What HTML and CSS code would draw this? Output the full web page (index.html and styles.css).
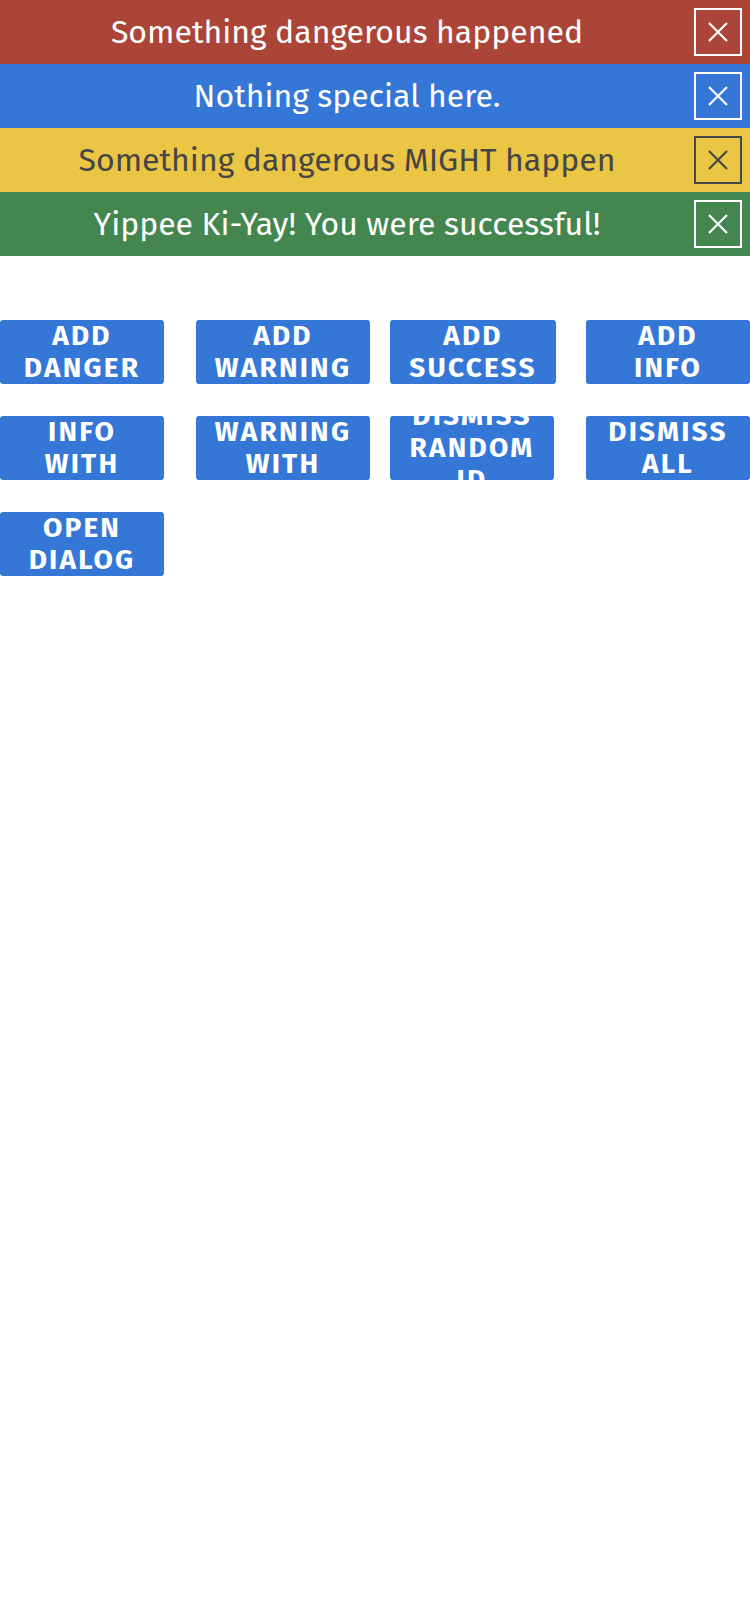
FILE: index.html
```html
<!DOCTYPE html>
<html lang="en">
<head>
<meta charset="utf-8">
<title>Notifications</title>
<link rel="stylesheet" href="styles.css">
</head>
<body>
<div class="alerts">
  <div class="alert alert-danger">
    <span class="alert-text">Something dangerous happened</span>
    <button class="alert-close" aria-label="Close"><svg viewBox="0 0 20 20" width="20" height="20"><path d="M1 1 L19 19 M19 1 L1 19" /></svg></button>
  </div>
  <div class="alert alert-info">
    <span class="alert-text">Nothing special here.</span>
    <button class="alert-close" aria-label="Close"><svg viewBox="0 0 20 20" width="20" height="20"><path d="M1 1 L19 19 M19 1 L1 19" /></svg></button>
  </div>
  <div class="alert alert-warning">
    <span class="alert-text">Something dangerous MIGHT happen</span>
    <button class="alert-close" aria-label="Close"><svg viewBox="0 0 20 20" width="20" height="20"><path d="M1 1 L19 19 M19 1 L1 19" /></svg></button>
  </div>
  <div class="alert alert-success">
    <span class="alert-text">Yippee Ki-Yay! You were successful!</span>
    <button class="alert-close" aria-label="Close"><svg viewBox="0 0 20 20" width="20" height="20"><path d="M1 1 L19 19 M19 1 L1 19" /></svg></button>
  </div>
</div>

<div class="actions">
  <button class="btn"><span class="btn-label">Add danger</span></button>
  <button class="btn btn-wide"><span class="btn-label">Add warning</span></button>
  <button class="btn btn-mid"><span class="btn-label">Add success</span></button>
  <button class="btn"><span class="btn-label">Add info</span></button>

  <button class="btn"><span class="btn-label">Info with</span></button>
  <button class="btn btn-wide"><span class="btn-label">Warning with</span></button>
  <button class="btn"><span class="btn-label">Dismiss random ID</span></button>
  <button class="btn"><span class="btn-label">Dismiss all</span></button>

  <button class="btn"><span class="btn-label">Open dialog</span></button>
</div>
</body>
</html>
```

FILE: styles.css
```css
html, body {
  margin: 0;
  padding: 0;
  background: #ffffff;
}

body {
  font-family: "Fira Sans", "Open Sans", "Noto Sans", sans-serif;
}

.alerts {
  display: flex;
  flex-direction: column;
}

.alert {
  height: 64px;
  display: flex;
  align-items: center;
  color: #ffffff;
}

.alert-danger { background: #ab4538; }
.alert-info { background: #3477d6; }
.alert-warning { background: #ebc544; color: #464646; }
.alert-success { background: #438650; }

.alert-text {
  flex: 1;
  text-align: center;
  font-size: 32px;
  line-height: 40px;
  white-space: nowrap;
}

.alert-close {
  width: 48px;
  height: 48px;
  margin-right: 8px;
  padding: 0;
  border: 2px solid currentColor;
  background: transparent;
  color: inherit;
  display: flex;
  align-items: center;
  justify-content: center;
  cursor: pointer;
}

.alert-close svg {
  display: block;
  stroke: currentColor;
  stroke-width: 2.2;
  fill: none;
}

.actions {
  margin-top: 64px;
  display: grid;
  grid-template-columns: 196px 194px 196px 164px;
  row-gap: 32px;
  justify-items: start;
}

.btn {
  width: 164px;
  height: 64px;
  padding: 0;
  border: none;
  border-radius: 3px;
  background: #3477d6;
  color: #ffffff;
  display: flex;
  align-items: center;
  justify-content: center;
  overflow: hidden;
  font-family: "Fira Sans", "Open Sans", "Noto Sans", sans-serif;
  font-weight: 700;
  font-size: 28px;
  line-height: 32px;
  letter-spacing: 2.2px;
  text-transform: uppercase;
  cursor: pointer;
}

.btn-wide { width: 174px; }
.btn-mid { width: 166px; }

.btn-label {
  display: block;
  width: min-content;
  text-align: center;
}
```
